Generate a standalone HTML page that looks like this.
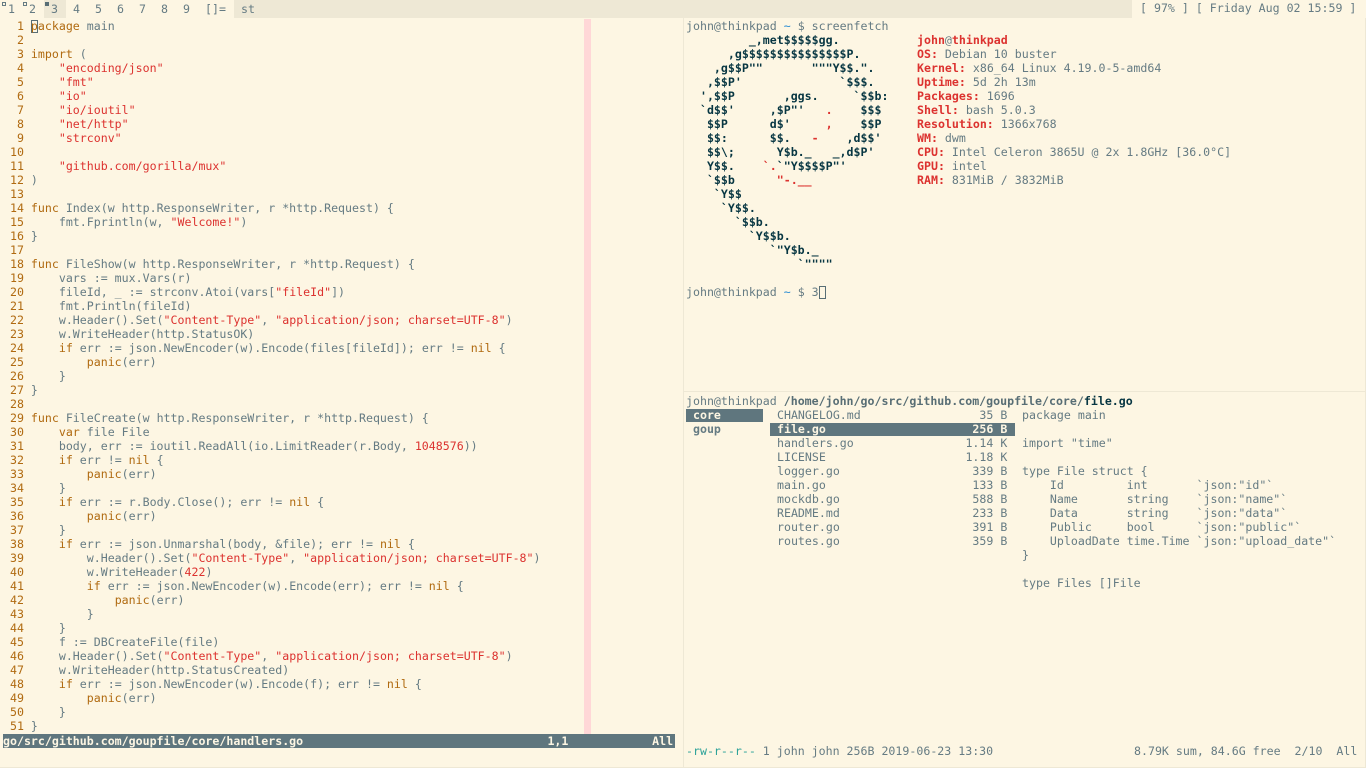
<!DOCTYPE html>
<html><head><meta charset="utf-8"><style>
*{margin:0;padding:0;box-sizing:border-box}
html,body{width:1366px;height:768px;overflow:hidden;background:#fdf6e3}
body{position:relative;font-family:"DejaVu Sans Mono","Liberation Mono",monospace;font-size:11.6px;color:#657b83}
pre{position:absolute;font:inherit;line-height:14px;white-space:pre;margin:0}
.k{color:#b06a10}.s{color:#dc322f}.n{color:#b06a10}
.b{font-weight:bold}
.r{color:#dc322f;font-weight:bold}
.a{color:#073642;font-weight:bold}
.bl{color:#268bd2}
.c{color:#2aa198}
.d{color:#dc322f}
.t{position:absolute;top:2px;line-height:14px}
</style></head><body>
<!-- top bar -->
<div style="position:absolute;left:0;top:0;width:1366px;height:18px;background:#eee8d5"></div>
<div style="position:absolute;left:0;top:0;width:44px;height:18px;background:#fdf6e3"></div>
<div style="position:absolute;left:66px;top:0;width:168px;height:18px;background:#fdf6e3"></div>
<div style="position:absolute;left:1132px;top:0;width:234px;height:18px;background:#fdf6e3"></div>
<div style="position:absolute;left:2px;top:2px;width:4px;height:4px;border:1px solid #657b83"></div>
<div style="position:absolute;left:23px;top:2px;width:4px;height:4px;border:1px solid #657b83"></div>
<div style="position:absolute;left:45px;top:2px;width:4px;height:4px;background:#586e75"></div>
<span class="t" style="left:8px">1</span>
<span class="t" style="left:29px">2</span>
<span class="t" style="left:51px">3</span>
<span class="t" style="left:73px">4</span>
<span class="t" style="left:95px">5</span>
<span class="t" style="left:117px">6</span>
<span class="t" style="left:139px">7</span>
<span class="t" style="left:161px">8</span>
<span class="t" style="left:183px">9</span>
<span class="t" style="left:205px">[]=</span>
<span class="t" style="left:241px">st</span>
<pre style="left:1140px;top:1px">[ 97% ] [ Friday Aug 02 15:59 ]</pre>
<!-- separators -->
<div style="position:absolute;left:683px;top:18px;width:1px;height:750px;background:#eee8d5"></div>
<div style="position:absolute;left:684px;top:391px;width:682px;height:1px;background:#eee8d5"></div>
<div style="position:absolute;left:0;top:767px;width:1366px;height:1px;background:#eee8d5"></div>
<div style="position:absolute;left:1365px;top:18px;width:1px;height:750px;background:#eee8d5"></div>
<!-- color column -->
<div style="position:absolute;left:584px;top:19px;width:7px;height:715px;background:#ffd7d7"></div>
<!-- cursor -->
<div style="position:absolute;left:31px;top:20px;width:7px;height:13px;border:1px solid #586e75"></div>
<pre style="left:3px;top:19px"><span class="n">  1 </span><span class="k">package</span> main
<span class="n">  2 </span>
<span class="n">  3 </span><span class="k">import</span> (
<span class="n">  4 </span>    <span class="s">"encoding/json"</span>
<span class="n">  5 </span>    <span class="s">"fmt"</span>
<span class="n">  6 </span>    <span class="s">"io"</span>
<span class="n">  7 </span>    <span class="s">"io/ioutil"</span>
<span class="n">  8 </span>    <span class="s">"net/http"</span>
<span class="n">  9 </span>    <span class="s">"strconv"</span>
<span class="n"> 10 </span>
<span class="n"> 11 </span>    <span class="s">"github.com/gorilla/mux"</span>
<span class="n"> 12 </span>)
<span class="n"> 13 </span>
<span class="n"> 14 </span><span class="k">func</span> Index(w http.ResponseWriter, r *http.Request) {
<span class="n"> 15 </span>    fmt.Fprintln(w, <span class="s">"Welcome!"</span>)
<span class="n"> 16 </span>}
<span class="n"> 17 </span>
<span class="n"> 18 </span><span class="k">func</span> FileShow(w http.ResponseWriter, r *http.Request) {
<span class="n"> 19 </span>    vars := mux.Vars(r)
<span class="n"> 20 </span>    fileId, _ := strconv.Atoi(vars[<span class="s">"fileId"</span>])
<span class="n"> 21 </span>    fmt.Println(fileId)
<span class="n"> 22 </span>    w.Header().Set(<span class="s">"Content-Type"</span>, <span class="s">"application/json; charset=UTF-8"</span>)
<span class="n"> 23 </span>    w.WriteHeader(http.StatusOK)
<span class="n"> 24 </span>    <span class="k">if</span> err := json.NewEncoder(w).Encode(files[fileId]); err != <span class="k">nil</span> {
<span class="n"> 25 </span>        <span class="k">panic</span>(err)
<span class="n"> 26 </span>    }
<span class="n"> 27 </span>}
<span class="n"> 28 </span>
<span class="n"> 29 </span><span class="k">func</span> FileCreate(w http.ResponseWriter, r *http.Request) {
<span class="n"> 30 </span>    <span class="k">var</span> file File
<span class="n"> 31 </span>    body, err := ioutil.ReadAll(io.LimitReader(r.Body, <span class="s">1048576</span>))
<span class="n"> 32 </span>    <span class="k">if</span> err != <span class="k">nil</span> {
<span class="n"> 33 </span>        <span class="k">panic</span>(err)
<span class="n"> 34 </span>    }
<span class="n"> 35 </span>    <span class="k">if</span> err := r.Body.Close(); err != <span class="k">nil</span> {
<span class="n"> 36 </span>        <span class="k">panic</span>(err)
<span class="n"> 37 </span>    }
<span class="n"> 38 </span>    <span class="k">if</span> err := json.Unmarshal(body, &amp;file); err != <span class="k">nil</span> {
<span class="n"> 39 </span>        w.Header().Set(<span class="s">"Content-Type"</span>, <span class="s">"application/json; charset=UTF-8"</span>)
<span class="n"> 40 </span>        w.WriteHeader(<span class="s">422</span>)
<span class="n"> 41 </span>        <span class="k">if</span> err := json.NewEncoder(w).Encode(err); err != <span class="k">nil</span> {
<span class="n"> 42 </span>            <span class="k">panic</span>(err)
<span class="n"> 43 </span>        }
<span class="n"> 44 </span>    }
<span class="n"> 45 </span>    f := DBCreateFile(file)
<span class="n"> 46 </span>    w.Header().Set(<span class="s">"Content-Type"</span>, <span class="s">"application/json; charset=UTF-8"</span>)
<span class="n"> 47 </span>    w.WriteHeader(http.StatusCreated)
<span class="n"> 48 </span>    <span class="k">if</span> err := json.NewEncoder(w).Encode(f); err != <span class="k">nil</span> {
<span class="n"> 49 </span>        <span class="k">panic</span>(err)
<span class="n"> 50 </span>    }
<span class="n"> 51 </span>}</pre>
<!-- vim status -->
<div style="position:absolute;left:3px;top:734px;width:672px;height:14px;background:#5f767e"></div>
<pre class="b" style="left:3px;top:734px;color:#fdf6e3">go/src/github.com/goupfile/core/handlers.go                                   1,1            All</pre>
<!-- screenfetch -->
<pre style="left:686px;top:19px">john@thinkpad <span class="bl">~</span> $ screenfetch</pre>
<pre class="a" style="left:686px;top:33px">         _,met$$$$$gg.
      ,g$$$$$$$$$$$$$$$P.
    ,g$$P""       """Y$$.".
   ,$$P'              `$$$.
  ',$$P       ,ggs.     `$$b:
  `d$$'     ,$P"'   <span class="d">.</span>    $$$
   $$P      d$'     <span class="d">,</span>    $$P
   $$:      $$.   <span class="d">-</span>    ,d$$'
   $$\;      Y$b._   _,d$P'
   Y$$.    <span class="d">`.</span>`"Y$$$$P"'
   `$$b      <span class="d">"-.__</span>
    `Y$$
     `Y$$.
       `$$b.
         `Y$$b.
            `"Y$b._
                `""""</pre>
<pre style="left:917px;top:33px"><span class="r">john</span>@<span class="r">thinkpad</span>
<span class="r">OS:</span> Debian 10 buster
<span class="r">Kernel:</span> x86_64 Linux 4.19.0-5-amd64
<span class="r">Uptime:</span> 5d 2h 13m
<span class="r">Packages:</span> 1696
<span class="r">Shell:</span> bash 5.0.3
<span class="r">Resolution:</span> 1366x768
<span class="r">WM:</span> dwm
<span class="r">CPU:</span> Intel Celeron 3865U @ 2x 1.8GHz [36.0°C]
<span class="r">GPU:</span> intel
<span class="r">RAM:</span> 831MiB / 3832MiB</pre>
<pre style="left:686px;top:285px">john@thinkpad <span class="bl">~</span> $ 3</pre>
<div style="position:absolute;left:819px;top:286px;width:7px;height:13px;border:1px solid #586e75"></div>
<!-- ranger -->
<pre style="left:686px;top:394px">john@thinkpad <span class="b" style="color:#586e75">/home/john/go/src/github.com/goupfile/core/<span style="color:#073642">file.go</span></span></pre>
<div style="position:absolute;left:686px;top:409px;width:77px;height:13px;background:#5f767e"></div>
<pre class="b" style="left:686px;top:408px"><span style="color:#fdf6e3"> core</span>
 goup</pre>
<div style="position:absolute;left:770px;top:423px;width:245px;height:13px;background:#5f767e"></div>
<pre style="left:770px;top:408px"> CHANGELOG.md                 35 B
<span class="b" style="color:#fdf6e3"> file.go                     256 B</span>
 handlers.go                1.14 K
 LICENSE                    1.18 K
 logger.go                   339 B
 main.go                     133 B
 mockdb.go                   588 B
 README.md                   233 B
 router.go                   391 B
 routes.go                   359 B</pre>
<pre style="left:1022px;top:408px">package main

import "time"

type File struct {
    Id         int       `json:"id"`
    Name       string    `json:"name"`
    Data       string    `json:"data"`
    Public     bool      `json:"public"`
    UploadDate time.Time `json:"upload_date"`
}

type Files []File</pre>
<pre style="left:686px;top:744px"><span class="c">-rw-r--r--</span> 1 john john 256B 2019-06-23 13:30</pre>
<pre style="left:1134px;top:744px">8.79K sum, 84.6G free  2/10  All</pre>
</body></html>
